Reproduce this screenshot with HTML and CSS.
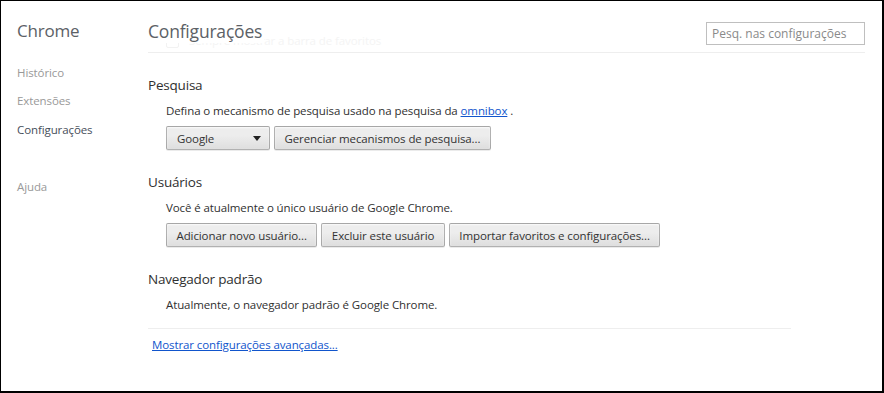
FILE: index.html
```html
<!DOCTYPE html>
<html lang="pt-BR">
<head>
    <meta charset="UTF-8">
    <title>Configurações</title>
    <link rel="stylesheet" href="styles.css">
</head>
<body>

<div class="frame">
    <!-- Sidebar navigation -->
    <div class="sidebar">
        <h1>Chrome</h1>
        <ul class="nav">
            <li>Histórico</li>
            <li>Extensões</li>
            <li class="selected">Configurações</li>
            <li class="help">Ajuda</li>
        </ul>
    </div>

    <!-- Settings page -->
    <div class="main">
        <div class="ghost"><span class="ghost-box"></span>Sempre mostrar a barra de favoritos</div>

        <div class="header">
            <h1>Configurações</h1>
            <input type="search" class="search" placeholder="Pesq. nas configurações">
        </div>

        <div class="section">
            <h3>Pesquisa</h3>
            <div class="content">
                <p>Defina o mecanismo de pesquisa usado na pesquisa da <a href="#">omnibox</a> .</p>
                <div class="buttons">
                    <div class="select">Google<span class="arrow"></span></div>
                    <button>Gerenciar mecanismos de pesquisa...</button>
                </div>
            </div>
        </div>

        <div class="section">
            <h3>Usuários</h3>
            <div class="content">
                <p>Você é atualmente o único usuário de Google Chrome.</p>
                <div class="buttons">
                    <button>Adicionar novo usuário...</button>
                    <button>Excluir este usuário</button>
                    <button>Importar favoritos e configurações...</button>
                </div>
            </div>
        </div>

        <div class="section">
            <h3>Navegador padrão</h3>
            <div class="content">
                <p>Atualmente, o navegador padrão é Google Chrome.</p>
            </div>
        </div>

        <div class="footer">
            <a href="#">Mostrar configurações avançadas...</a>
        </div>
    </div>
</div>

</body>
</html>
```
FILE: styles.css
```css
body {
    margin: 0;
    font-family: 'Open Sans', 'Noto Sans', sans-serif;
    font-size: 11.5px;
    letter-spacing: -0.1px;
    color: #303030;
    background: #fff;
}

.frame {
    display: flex;
    width: 884px;
    height: 393px;
    box-sizing: border-box;
    border-style: solid;
    border-color: #000;
    border-width: 1px 2px 2px 1px;
    overflow: hidden;
}

/* Sidebar */

.sidebar {
    width: 147px;
    flex-shrink: 0;
    padding: 18px 0 0 16px;
    box-sizing: border-box;
}

h1 {
    margin: 0;
    font-size: 17.5px;
    font-weight: normal;
    letter-spacing: -0.2px;
    line-height: 24px;
    color: #5c6166;
}

.sidebar h1 {
    font-size: 17px;
}

.nav {
    list-style: none;
    margin: 15.5px 0 0;
    padding: 0;
}

.nav li {
    line-height: 28.5px;
    color: #999;
}

.nav li.selected {
    color: #464e5a;
}

.nav li.help {
    margin-top: 28.5px;
}

/* Main */

.main {
    flex: 1;
    position: relative;
    padding: 18px 17px 0 0;
}

/* faded row scrolled behind the header */
.ghost {
    position: absolute;
    left: 18px;
    top: 31px;
    color: #f4f4f4;
    display: flex;
    align-items: center;
    line-height: 18px;
}

.ghost-box {
    width: 11px;
    height: 11px;
    border: 1px solid #f2f2f2;
    border-radius: 2px;
    margin-right: 10px;
}

.header {
    position: relative;
    display: flex;
    justify-content: space-between;
    align-items: flex-start;
    padding-bottom: 7px;
    border-bottom: 1px solid #eee;
}

.header h1 {
    background: #fff;
    padding-right: 2px;
}

.search {
    width: 159px;
    height: 23px;
    margin-top: 3px;
    box-sizing: border-box;
    border: 1px solid #bfbfbf;
    border-radius: 0;
    padding: 0 5px;
    font-family: inherit;
    font-size: 12px;
    outline: none;
}

.search::placeholder {
    color: #8a8a8a;
}

.section {
    margin-top: 22px;
    max-width: 639px;
}

h3 {
    margin: 0;
    font-size: 13.5px;
    font-weight: normal;
    letter-spacing: -0.2px;
    line-height: 20px;
    color: #303030;
}

.content {
    padding-left: 18px;
}

.content p {
    margin: 6.5px 0 0;
    line-height: 18px;
}

a {
    color: #15c;
    text-decoration: underline;
}

.buttons {
    display: flex;
    gap: 4px;
    margin-top: 6.5px;
}

button,
.select {
    height: 24px;
    box-sizing: border-box;
    padding: 0 9.5px;
    font-family: inherit;
    font-size: 11.5px;
    letter-spacing: -0.1px;
    color: #333;
    background: linear-gradient(#ededed, #ededed 38%, #dedede);
    border: 1px solid rgba(0, 0, 0, 0.25);
    border-radius: 2px;
    box-shadow: 0 1px 0 rgba(0, 0, 0, 0.08), inset 0 1px 2px rgba(255, 255, 255, 0.75);
}

.select {
    width: 104px;
    padding: 0 10px;
    display: flex;
    align-items: center;
    justify-content: space-between;
}

.arrow {
    width: 0;
    height: 0;
    border-left: 4px solid transparent;
    border-right: 4px solid transparent;
    border-top: 5px solid #222;
    margin-right: -2px;
}

.footer {
    max-width: 639px;
    margin-top: 14.5px;
    border-top: 1px solid #eee;
    padding: 6.5px 0 0 4px;
    line-height: 18px;
}
```
